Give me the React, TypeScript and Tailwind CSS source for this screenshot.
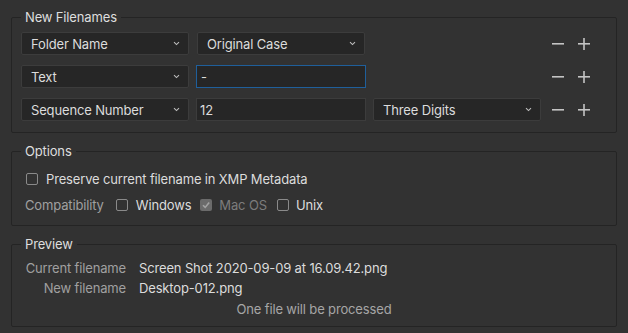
import React from 'react'

function Chevron() {
  return (
    <svg width="7" height="5" viewBox="0 0 7 5" className="shrink-0">
      <path d="M1 1.2 L3.5 3.6 L6 1.2" fill="none" stroke="#bdbdbd" strokeWidth="1.1" />
    </svg>
  )
}

function Select({ label }: { label: string }) {
  return (
    <div className="w-[168px] h-[23px] flex items-center justify-between pl-[9px] pr-[8px] bg-[#262626] border border-[#3c3c3c] rounded-[2px] text-[#dcdcdc]">
      <span>{label}</span>
      <Chevron />
    </div>
  )
}

function Input({ value, focused }: { value: string; focused?: boolean }) {
  return (
    <div
      className={
        focused
          ? 'w-[170px] h-[23px] ml-[-1px] flex items-center pl-[4px] bg-[#262626] border border-[#1f5f9b] text-[#dcdcdc]'
          : 'w-[170px] h-[23px] ml-[-1px] flex items-center pl-[3px] bg-[#262626] border border-[#3c3c3c] text-[#dcdcdc]'
      }
    >
      {value}
    </div>
  )
}

function PlusMinus() {
  return (
    <div className="ml-auto flex items-center gap-[14px] mr-[17px]">
      <svg width="12" height="12" viewBox="0 0 12 12">
        <rect x="0" y="5" width="12" height="1.6" fill="#c4c4c4" />
      </svg>
      <svg width="12" height="12" viewBox="0 0 12 12">
        <rect x="0" y="5" width="12" height="1.6" fill="#c4c4c4" />
        <rect x="5.2" y="0" width="1.6" height="12" fill="#c4c4c4" />
      </svg>
    </div>
  )
}

function Checkbox({ checked }: { checked?: boolean }) {
  if (checked) {
    return (
      <div className="w-[12px] h-[12px] rounded-[2px] bg-[#6b6b6b] flex items-center justify-center shrink-0">
        <svg width="10" height="10" viewBox="0 0 10 10">
          <path d="M2 5.2 L4.2 7.4 L8.2 2.4" fill="none" stroke="#a3a3a3" strokeWidth="1.6" />
        </svg>
      </div>
    )
  }
  return <div className="w-[12px] h-[12px] rounded-[2px] border border-[#8a8a8a] shrink-0" />
}

export default function App() {
  return (
    <div
      className="w-[628px] h-[333px] bg-[#323232] px-[11px] pt-[9px] text-[13px] leading-[16px] tracking-[-0.15px] text-[#dcdcdc] overflow-hidden"
      style={{ fontFamily: 'Inter, "Noto Sans", sans-serif' }}
    >
      {/* New Filenames */}
      <fieldset className="border border-[#242424] rounded-[2px] px-[9px] pt-[7px] pb-[11px]">
        <legend className="px-[4px] text-[#dedede]">New Filenames</legend>
        <div className="flex flex-col gap-[9px]">
          <div className="flex items-center">
            <Select label="Folder Name" />
            <div className="ml-[8px]">
              <Select label="Original Case" />
            </div>
            <PlusMinus />
          </div>
          <div className="flex items-center mt-[1px]">
            <Select label="Text" />
            <div className="ml-[8px]">
              <Input value="-" focused />
            </div>
            <PlusMinus />
          </div>
          <div className="flex items-center mt-[1px]">
            <Select label="Sequence Number" />
            <div className="ml-[8px]">
              <Input value="12" />
            </div>
            <div className="ml-[7px]">
              <Select label="Three Digits" />
            </div>
            <PlusMinus />
          </div>
        </div>
      </fieldset>

      {/* Options */}
      <fieldset className="mt-[10px] border border-[#242424] rounded-[2px] px-[9px] pt-[12px] pb-[12px]">
        <legend className="px-[4px] text-[#dedede]">Options</legend>
        <div className="flex flex-col gap-[10px]">
          <div className="flex items-center pl-[5px] gap-[8px]">
            <Checkbox />
            <span className="text-[#dcdcdc]">Preserve current filename in XMP Metadata</span>
          </div>
          <div className="flex items-center pl-[4px]">
            <span className="text-[#a0a0a0]">Compatibility</span>
            <div className="flex items-center gap-[8px] ml-[12px]">
              <Checkbox />
              <span>Windows</span>
            </div>
            <div className="flex items-center gap-[7px] ml-[9px]">
              <Checkbox checked />
              <span className="text-[#7c7c7c]">Mac OS</span>
            </div>
            <div className="flex items-center gap-[7px] ml-[10px]">
              <Checkbox />
              <span>Unix</span>
            </div>
          </div>
        </div>
      </fieldset>

      {/* Preview */}
      <fieldset className="mt-[10px] border border-[#242424] rounded-[2px] px-[9px] pt-[8px] pb-[9px]">
        <legend className="px-[4px] text-[#dedede]">Preview</legend>
        <div className="flex flex-col">
          <div className="flex items-center">
            <span className="w-[105px] text-right text-[#a0a0a0]">Current filename</span>
            <span className="ml-[13px]">Screen Shot 2020-09-09 at 16.09.42.png</span>
          </div>
          <div className="flex items-center mt-[4px]">
            <span className="w-[105px] text-right text-[#a0a0a0]">New filename</span>
            <span className="ml-[13px]">Desktop-012.png</span>
          </div>
          <div className="mt-[5px] text-center text-[#a6a6a6]">One file will be processed</div>
        </div>
      </fieldset>
    </div>
  )
}
